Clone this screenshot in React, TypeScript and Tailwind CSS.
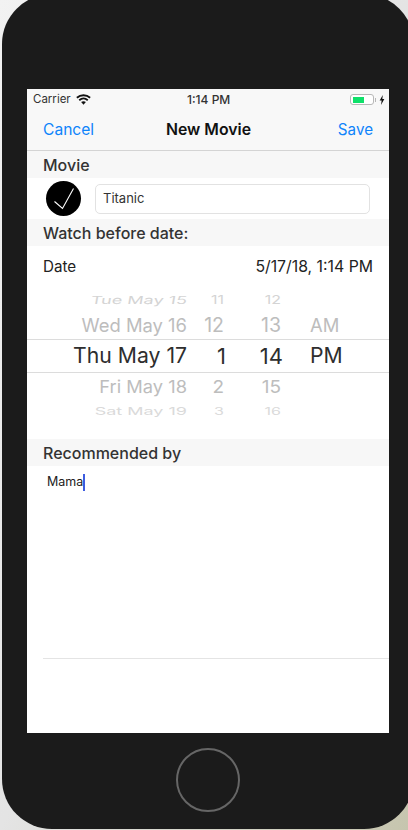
import React from "react";

const font = { fontFamily: '"Inter", "Liberation Sans", sans-serif' };

function Wifi() {
  return (
    <svg width="15" height="11" viewBox="0 0 14 10" fill="none" stroke="#111" strokeWidth="1.7">
      <path d="M0.8 3.4C4.4 0.2 9.6 0.2 13.2 3.4" />
      <path d="M3 5.7C5.4 3.6 8.6 3.6 11 5.7" />
      <path d="M7 9.8L4.8 7.4C6 6.4 8 6.4 9.2 7.4Z" fill="#111" stroke="none" />
    </svg>
  );
}

function Battery() {
  return (
    <div className="flex items-center">
      <div className="w-[24px] h-[11px] rounded-[3px] border-[1.5px] border-[#b8b8b8] bg-white pl-[2px] py-[1.5px] flex">
        <div className="w-[11px] bg-[#0fe06a]" />
      </div>
      <div className="w-[1.5px] h-[4px] bg-[#b8b8b8] ml-[0.5px]" />
      <svg width="6" height="10" viewBox="0 0 5 9" className="ml-[3px]"><path d="M3.2 0L0.4 5H2.2L1.6 9L4.6 3.7H2.8Z" fill="#111" /></svg>
    </div>
  );
}

function Header({ children }: { children: React.ReactNode }) {
  return (
    <div className="h-[27px] bg-[#f7f7f7] pl-4 pt-[1px] flex items-center text-[16px] font-medium text-[#333]">{children}</div>
  );
}

const rows = [
  { row: "h-[24px] text-[#d4d4d4]", date: "text-[18px] scale-y-[0.62] -skew-x-6 origin-right", num: "text-[16px] scale-y-[0.7]", d: "Tue May 15", hr: "11", min: "12", ap: "" },
  { row: "h-[27px] text-[#bdbdbd]", date: "text-[18.4px]", num: "text-[19.5px]", d: "Wed May 16", hr: "12", min: "13", ap: "AM" },
  { row: "h-[34px] text-[#2e2e2e] border-y border-[#dcdcdc]", date: "text-[21.2px]", num: "text-[22px] translate-x-[2px]", d: "Thu May 17", hr: "1", min: "14", ap: "PM" },
  { row: "h-[29px] text-[#bdbdbd]", date: "text-[18.3px] scale-y-[0.92]", num: "text-[19px] scale-y-[0.92]", d: "Fri May 18", hr: "2", min: "15", ap: "" },
  { row: "h-[18px] text-[#dadada]", date: "text-[18px] scale-y-[0.6] origin-right", num: "text-[16px] scale-y-[0.65]", d: "Sat May 19", hr: "3", min: "16", ap: "" },
];

function PickerRow({ r }: { r: (typeof rows)[number] }) {
  return (
    <div className={`grid grid-cols-[160px_37px_57px_60px] items-center leading-none ${r.row}`}>
      <span className={`text-right ${r.date}`}>{r.d}</span>
      <span className={`text-right ${r.num}`}>{r.hr}</span>
      <span className={`text-right ${r.num}`}>{r.min}</span>
      <span className={`text-left pl-[29px] ${r.date}`}>{r.ap}</span>
    </div>
  );
}

export default function App() {
  return (
    <div className="w-[408px] h-[830px] overflow-hidden bg-gradient-to-br from-[#f2f2f2] via-[#e4e4e4] to-[#c6c5ae]" style={font}>
      <div className="ml-[2px] -mt-[6px] w-[412px] h-[835px] bg-[#1b1b1b] rounded-[50px] pt-[95px] pl-[25px]">
        <div className="w-[362px] h-[644px] bg-white flex flex-col">
          <div className="bg-[#f8f8f8] border-b border-[#d4d4d4] h-[62px] flex flex-col">
            <div className="h-[21px] relative flex items-center justify-between pl-[6px] pr-[4px] text-[11.5px] text-[#333]">
              <div className="flex items-center gap-[5px]">
                <span>Carrier</span>
                <Wifi />
              </div>
              <span className="font-medium text-[12px] absolute left-[160px]">1:14 PM</span>
              <Battery />
            </div>
            <div className="flex-1 flex items-center justify-between px-4 text-[15.6px] relative">
              <span className="text-[#0f84fb]">Cancel</span>
              <span className="font-semibold text-[15.8px] text-[#111] absolute left-[139px]">New Movie</span>
              <span className="text-[#0f84fb] text-[15.2px]">Save</span>
            </div>
          </div>
          <Header>Movie</Header>
          <div className="h-[41px] flex items-center pl-[19px] pr-[19px] gap-[14px]">
            <div className="w-[35px] h-[35px] rounded-full bg-black flex items-center justify-center">
              <svg width="24" height="24" viewBox="0 0 24 24" fill="none" stroke="#fff" strokeWidth="1.1">
                <path d="M2.5 14.5L10.5 21.5L21.5 1.5" />
              </svg>
            </div>
            <div className="flex-1 h-[30px] rounded-[5px] border border-[#e2e2e2] flex items-center px-[7px] text-[13px] text-[#333]">Titanic</div>
          </div>
          <Header>Watch before date:</Header>
          <div className="h-[41px] pt-[1px] flex items-center justify-between px-4 text-[#222]">
            <span className="text-[15.2px]">Date</span>
            <span className="text-[15.8px]">5/17/18, 1:14 PM</span>
          </div>
          <div className="h-[152px] flex flex-col pt-[1px] overflow-hidden">
            {rows.map((r) => (
              <PickerRow key={r.d} r={r} />
            ))}
          </div>
          <Header>Recommended by</Header>
          <div className="h-[193px] border-b border-[#e4e4e4] ml-4 pt-[8px] pl-[4px]">
            <div className="flex items-center h-[16px] text-[12.5px] text-[#222]">
              Mama
              <span className="w-[1.5px] h-[17px] bg-[#3d5ce0]" />
            </div>
          </div>
        </div>
        <div className="w-[64px] h-[64px] rounded-full border-[2.5px] border-[#666] ml-[149px] mt-[15px]" />
      </div>
    </div>
  );
}
